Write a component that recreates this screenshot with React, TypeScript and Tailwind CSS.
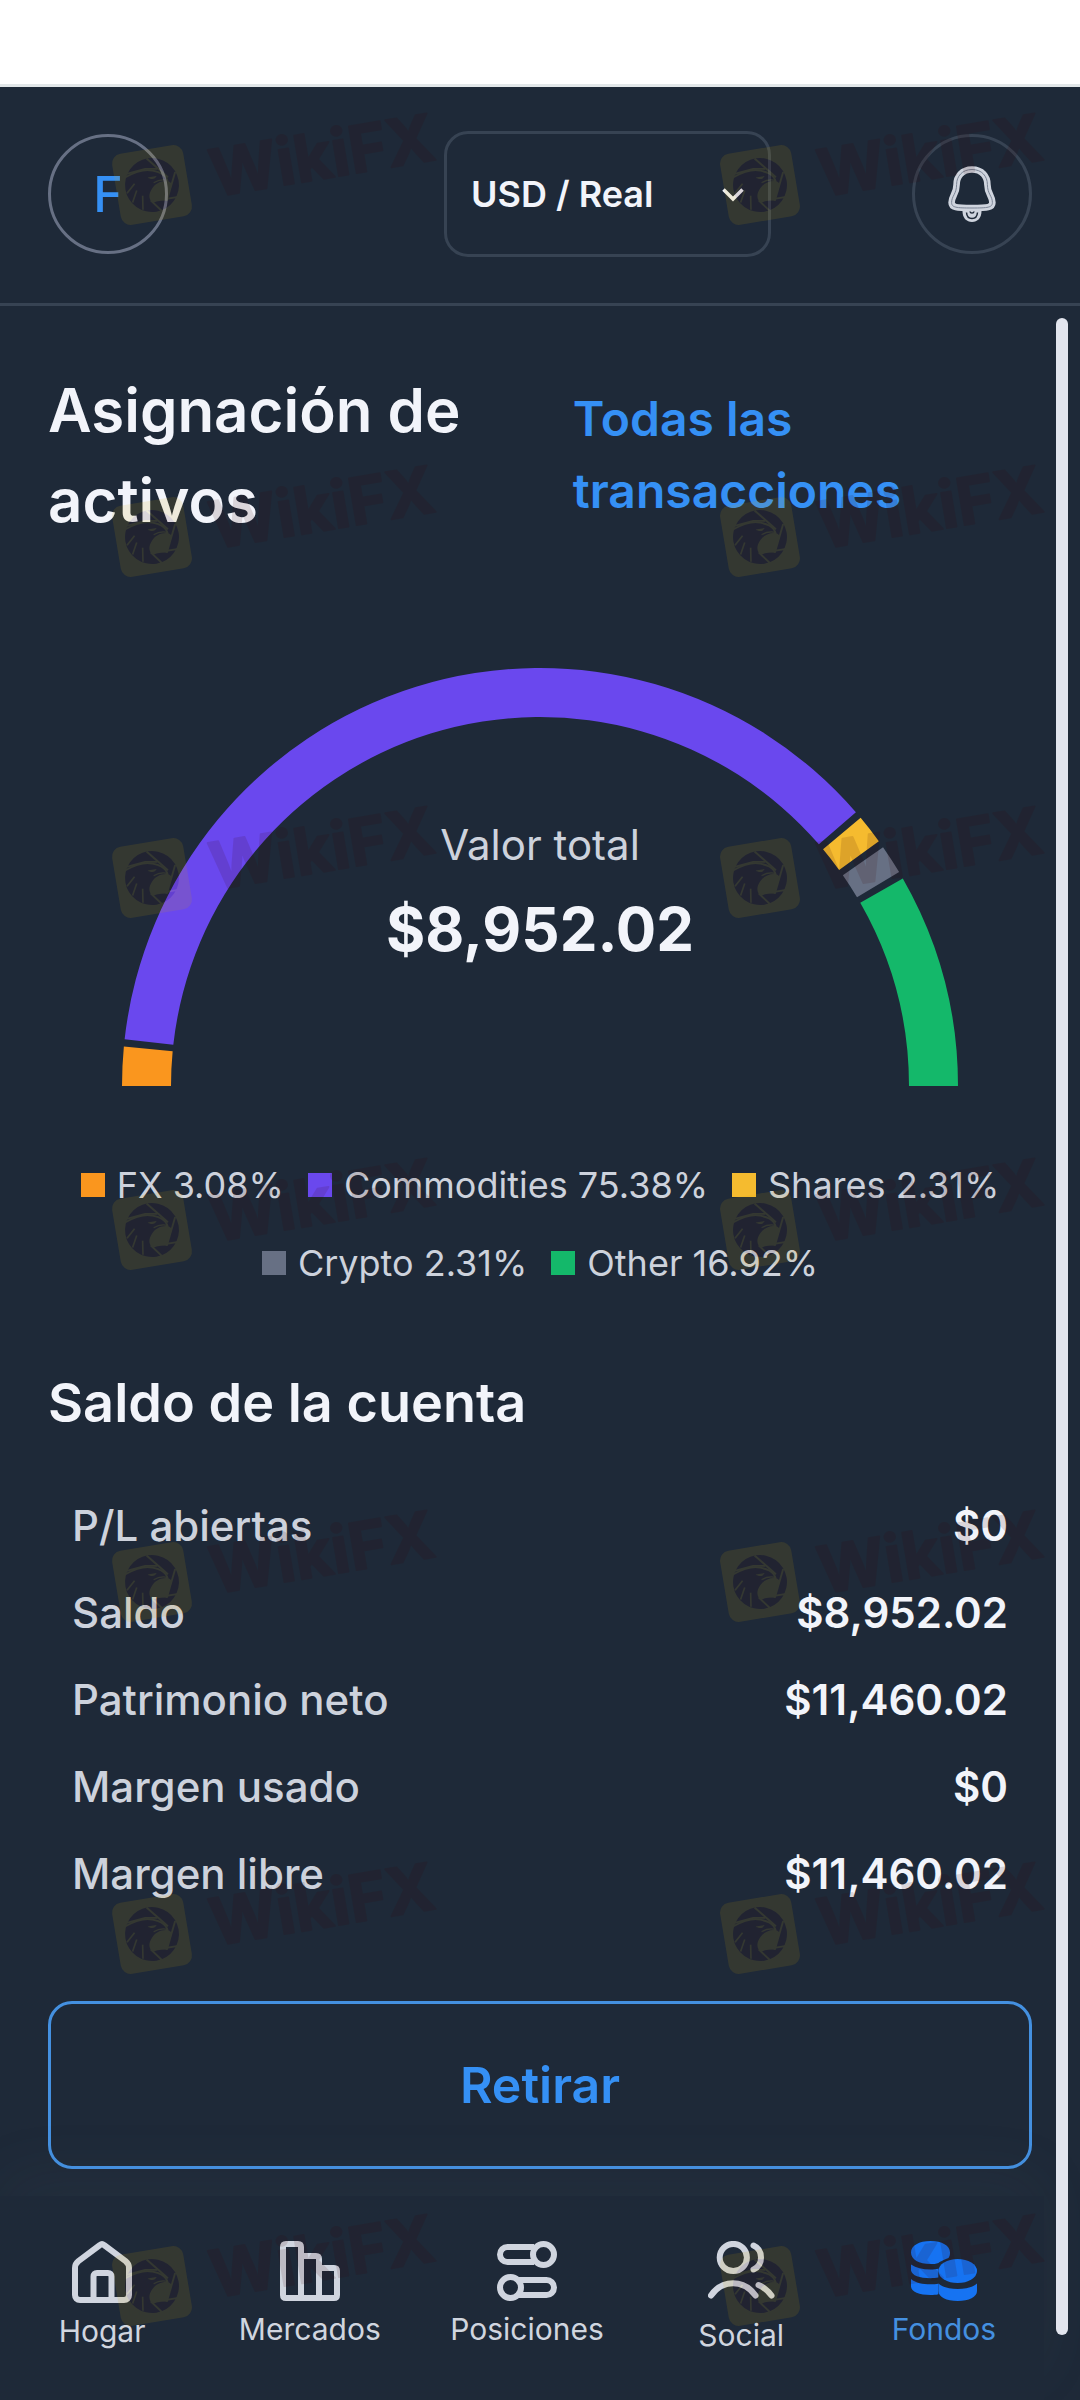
import React, { useState } from 'react';

const allocation = [
  { name: 'FX', percent: 3.08, fill: 'fill-[#fa961e]', swatch: 'bg-[#fa961e]' },
  { name: 'Commodities', percent: 75.38, fill: 'fill-[#6a48ee]', swatch: 'bg-[#6a48ee]' },
  { name: 'Shares', percent: 2.31, fill: 'fill-[#f5bb2f]', swatch: 'bg-[#f5bb2f]' },
  { name: 'Crypto', percent: 2.31, fill: 'fill-[#677084]', swatch: 'bg-[#677084]' },
  { name: 'Other', percent: 16.92, fill: 'fill-[#14b86a]', swatch: 'bg-[#14b86a]' },
];

const balances = [
  { label: 'P/L abiertas', value: '$0' },
  { label: 'Saldo', value: '$8,952.02' },
  { label: 'Patrimonio neto', value: '$11,460.02' },
  { label: 'Margen usado', value: '$0' },
  { label: 'Margen libre', value: '$11,460.02' },
];

// Half ring, drawn left to right with one degree between slices
const CX = 492;
const CY = 419;
const OUTER = 418;
const INNER = 369;
const PAD = 1;

const point = (r: number, deg: number) => {
  const rad = (deg * Math.PI) / 180;
  return `${(CX - r * Math.cos(rad)).toFixed(2)} ${(CY - r * Math.sin(rad)).toFixed(2)}`;
};

const slicePath = (start: number, end: number) =>
  `M${point(OUTER, start)} A${OUTER} ${OUTER} 0 0 1 ${point(OUTER, end)} L${point(INNER, end)} A${INNER} ${INNER} 0 0 0 ${point(INNER, start)} Z`;

const AllocationChart = () => {
  const usable = 180 - PAD * (allocation.length - 1);
  let cursor = 0;
  const slices = allocation.map((item) => {
    const start = cursor;
    const end = start + (usable * item.percent) / 100;
    cursor = end + PAD;
    return { ...item, d: slicePath(start, end) };
  });

  return (
    <div className="relative">
      <svg viewBox="0 0 984 419" className="block w-full">
        {slices.map((s) => (
          <path key={s.name} d={s.d} className={s.fill} />
        ))}
      </svg>
      <div className="absolute inset-x-0 bottom-28 text-center">
        <p className="text-[42px] leading-[63px] text-[#cdd2dc]">Valor total</p>
        <p className="mt-2 text-[60px] leading-[90px] font-bold">$8,952.02</p>
      </div>
    </div>
  );
};

const BellIcon = () => (
  <svg viewBox="0 0 48 56" className="h-14 w-12" fill="none">
    <path
      d="M24 3.5C14 3.5 8.6 10.5 8.6 18.5C8.6 28 3.6 30 3.6 36.5C3.6 41.5 8 42 24 42C40 42 44.4 41.5 44.4 36.5C44.4 30 39.4 28 39.4 18.5C39.4 10.5 34 3.5 24 3.5Z"
      stroke="#cfd4de"
      strokeWidth="6.6"
    />
    <path
      d="M24 3.5C14 3.5 8.6 10.5 8.6 18.5C8.6 28 3.6 30 3.6 36.5C3.6 41.5 8 42 24 42C40 42 44.4 41.5 44.4 36.5C44.4 30 39.4 28 39.4 18.5C39.4 10.5 34 3.5 24 3.5Z"
      stroke="#7a8394"
      strokeWidth="1"
    />
    <path d="M14.5 45H33.5C33.5 52 29.5 56 24 56C18.5 56 14.5 52 14.5 45Z" fill="#cfd4de" />
    <path d="M18.5 46.5C18.8 50.5 21 52.6 24 52.6C27 52.6 29.2 50.5 29.5 46.5" stroke="#1e2938" strokeWidth="1.5" />
    <path d="M22 45.5C22.3 47.6 25.7 47.6 26 45.5" stroke="#1e2938" strokeWidth="1.5" />
  </svg>
);

const HomeIcon = () => (
  <svg viewBox="0 0 60 62" className="h-[62px] w-[60px]" fill="none" stroke="currentColor" strokeWidth="6" strokeLinejoin="round">
    <path d="M3 27C3 24 4 22 6.4 20.1L28 4C29.2 3 30.8 3 32 4L53.6 20.1C56 22 57 24 57 27V54C57 57 55 59 52 59H8C5 59 3 57 3 54Z" />
    <path d="M21.5 59V35.5C21.5 33.3 22.8 32 25 32H36C38.2 32 39.5 33.3 39.5 35.5V59" />
  </svg>
);

const MarketsIcon = () => (
  <svg viewBox="0 0 60 60" className="h-[60px] w-[60px]" fill="none" stroke="currentColor" strokeWidth="6">
    <path d="M21 57V6Q21 3 18 3H6Q3 3 3 6V54Q3 57 6 57H54Q57 57 57 54V30Q57 27 54 27H39" />
    <path d="M21 15H36Q39 15 39 18V57" />
  </svg>
);

const PositionsIcon = () => (
  <svg viewBox="0 0 60 60" className="h-[60px] w-[60px]" fill="none" stroke="currentColor" strokeWidth="6">
    <circle cx="46.5" cy="13.5" r="10.5" />
    <path d="M37 6H10.5A7.5 7.5 0 0 0 10.5 21H37" />
    <circle cx="13.5" cy="46.5" r="10.5" />
    <path d="M22 39H49.5A7.5 7.5 0 0 1 49.5 54H22" />
  </svg>
);

const SocialIcon = () => (
  <svg viewBox="0 0 67 66" className="h-[66px] w-[67px]" fill="none" stroke="currentColor" strokeWidth="6" strokeLinecap="round">
    <circle cx="25.3" cy="16.5" r="13.6" />
    <path d="M45.5 4.5C50 6.5 53 11 53 16.5C53 22 50 26.5 45.5 28.5" />
    <path d="M3 54.5C14 38 36 38 47.5 54.5" />
    <path d="M50.5 44C55.5 46.2 60 49.8 63.5 54.5" />
  </svg>
);

const FundsIcon = () => (
  <svg viewBox="0 0 66 60" className="h-[60px] w-[66px]" fill="#1673f2">
    <path d="M19.5 0C31 0 39 4.5 39 11.5C39 14 38.5 15.5 37.5 17C32 19 28.5 21 27.5 22C25 23 22.5 23 19.5 23C8 23 0 18.5 0 11.5C0 4.5 8 0 19.5 0Z" />
    <path d="M0 23.5C5 27 11.5 28.5 19.5 28.5C22.5 28.5 25 28.3 27.3 27.8V36.6C25 37 22.5 37.2 19.5 37.2C8.5 37.2 1 34.5 0 29.5Z" />
    <path d="M0 38C5 42 11.5 43.3 19.5 43.3C22.5 43.3 25 43.1 27.3 42.7V53.2C25 53.8 22.5 54 19.5 54C8.5 54 0 50.5 0 45.5Z" />
    <ellipse cx="46.7" cy="30" rx="19.3" ry="12" />
    <path d="M27.4 42.5C32 46.5 38.5 48 46.7 48C54.9 48 61.5 46.5 66 42.5V50C66 56 58 60 46.7 60C35.4 60 27.4 56 27.4 50Z" />
  </svg>
);

const navItems = [
  { label: 'Hogar', Icon: HomeIcon },
  { label: 'Mercados', Icon: MarketsIcon },
  { label: 'Posiciones', Icon: PositionsIcon },
  { label: 'Social', Icon: SocialIcon },
  { label: 'Fondos', Icon: FundsIcon },
];

const Stamp = () => (
  <svg viewBox="0 -40 360 180" className="h-[180px] w-[360px] overflow-visible opacity-[0.12]">
    <g transform="translate(42 80) rotate(-9.5)">
      <rect x="-36" y="-36" width="72" height="72" rx="10" fill="#d5a600" />
      <circle r="27" fill="#390000" />
      {/* aperture blades */}
      <g stroke="#d5a600" strokeWidth="1.8" fill="none">
        <path d="M-25 -15L-4 -17L8 -15" />
        <path d="M-1 -27L17 -5" />
        <path d="M25 -9L12 18" />
        <path d="M24 16L-3 16L6 28" />
      </g>
      {/* open area in front of the chest */}
      <path d="M17 -1C10 -3 4 -1 0 3C-5 8 -6 13 -2 18L4 16L12 18L20 2Z" fill="#d5a600" />
      {/* head outline, eye and beak */}
      <path d="M-25 -12C-14 -16 -4 -17 3 -14C8 -12 15 -9 16 -1" stroke="#d5a600" strokeWidth="1.8" fill="none" />
      <path d="M-3 -8C0 -5 4 -5 6 -8Z" fill="#d5a600" />
      <path d="M2 -2C7 -4 11 -4 16 -2" stroke="#d5a600" strokeWidth="1.2" fill="none" />
      {/* feathers */}
      <path d="M-26 4L-17 -4M-22 14L-16 3M-13 23L-11 9" stroke="#d5a600" strokeWidth="1.6" />
    </g>
    <text
      transform="translate(104 92) rotate(-9.5)"
      className="text-[65px] font-bold"
      fill="#390000"
      stroke="#390000"
      strokeWidth="2"
      strokeLinejoin="round"
    >
      WikiFX
    </text>
  </svg>
);

const StampRow = () => (
  <div className="flex h-[352px] shrink-0 gap-[248px]">
    <Stamp />
    <Stamp />
  </div>
);

const Watermark = () => (
  <div aria-hidden="true" className="pointer-events-none absolute inset-0 flex flex-col pt-[65px] pl-[110px]">
    <StampRow />
    <div className="h-[341px] shrink-0">
      <StampRow />
    </div>
    <StampRow />
    <StampRow />
    <StampRow />
    <StampRow />
    <StampRow />
  </div>
);

export default function App() {
  const [account, setAccount] = useState('usd-real');
  const [active, setActive] = useState('Fondos');

  return (
    <div className="relative flex min-h-screen flex-col overflow-hidden bg-[#1e2938] font-['Inter',sans-serif] text-[#f2f4fa]">
      <div className="h-[87px] border-b-[3px] border-[#e2e7e9] bg-white" />

      <header className="flex h-[219px] items-center border-b-[3px] border-[#374353] px-12 pb-0.5">
        <button
          type="button"
          aria-label="Perfil"
          className="size-[120px] rounded-full border-[3px] border-[#677084] text-[50px] font-medium text-[#3590f5]"
        >
          F
        </button>
        <div className="relative mr-[141px] ml-auto">
          <select
            aria-label="Cuenta"
            value={account}
            onChange={(e) => setAccount(e.target.value)}
            className="h-[126px] w-[327px] appearance-none rounded-3xl border-[3px] border-[#374353] bg-transparent pl-6 text-4xl font-semibold"
          >
            <option value="usd-real">USD / Real</option>
          </select>
          <svg viewBox="0 0 22 14" className="pointer-events-none absolute top-[57px] right-[27px] h-[14px] w-[22px]" fill="none">
            <path d="M1.5 1.5L11 11L20.5 1.5" stroke="#f2f4fa" strokeWidth="3.5" />
          </svg>
        </div>
        <button
          type="button"
          aria-label="Notificaciones"
          className="flex size-[120px] items-center justify-center rounded-full border-[3px] border-[#374353]"
        >
          <BellIcon />
        </button>
      </header>

      <div className="relative flex flex-1 flex-col">
        <main className="px-12 pt-[59px] pb-[27px]">
          <div className="grid grid-cols-[8fr_7fr] items-center">
            <h1 className="text-[60px] leading-[90px] font-semibold">Asignación de activos</h1>
            <a href="#transacciones" className="text-5xl leading-[72px] font-semibold text-[#3590f5]">
              Todas las transacciones
            </a>
          </div>

          <section className="mt-[122px]">
            <AllocationChart />
            <ul className="mt-[72px] flex flex-wrap justify-center gap-x-6 gap-y-6 text-4xl text-[#cdd2dc]">
              {allocation.map((item) => (
                <li key={item.name} className="flex items-center gap-3 leading-[54px]">
                  <span className={`size-6 ${item.swatch}`} />
                  {item.name} {item.percent}%
                </li>
              ))}
            </ul>
          </section>

          <section className="mt-[72px]">
            <h2 className="text-[54px] leading-[81px] font-semibold">Saldo de la cuenta</h2>
            <dl className="mt-[51px] flex flex-col gap-6 px-6 text-[42px] leading-[63px]">
              {balances.map((row) => (
                <div key={row.label} className="flex justify-between">
                  <dt className="font-medium text-[#cdd2dc]">{row.label}</dt>
                  <dd className="font-semibold">{row.value}</dd>
                </div>
              ))}
            </dl>
          </section>

          <button
            type="button"
            className="mt-24 h-[168px] w-full rounded-3xl border-[3px] border-[#4490e0] text-[50px] font-semibold text-[#3590f5]"
          >
            Retirar
          </button>
        </main>

        <nav className="mr-9 grid grid-cols-[204fr_211fr_223fr_205fr_200fr] items-start bg-[#1e2938] pt-[45px] pb-[42px] shadow-[0_-24px_60px_rgba(120,130,130,0.06)]">
          {navItems.map(({ label, Icon }) => (
            <button
              key={label}
              type="button"
              onClick={() => setActive(label)}
              className={`flex flex-col items-center gap-1.5 text-[30px] leading-[45px] ${active === label ? 'text-[#4490e0]' : 'text-[#d0d5df]'}`}
            >
              <Icon />
              {label}
            </button>
          ))}
        </nav>

        {/* Scrollbar thumb */}
        <div className="absolute top-3 right-3 bottom-[65px] w-3 rounded-full bg-[#e2e5ee]" />
      </div>

      <Watermark />
    </div>
  );
}
